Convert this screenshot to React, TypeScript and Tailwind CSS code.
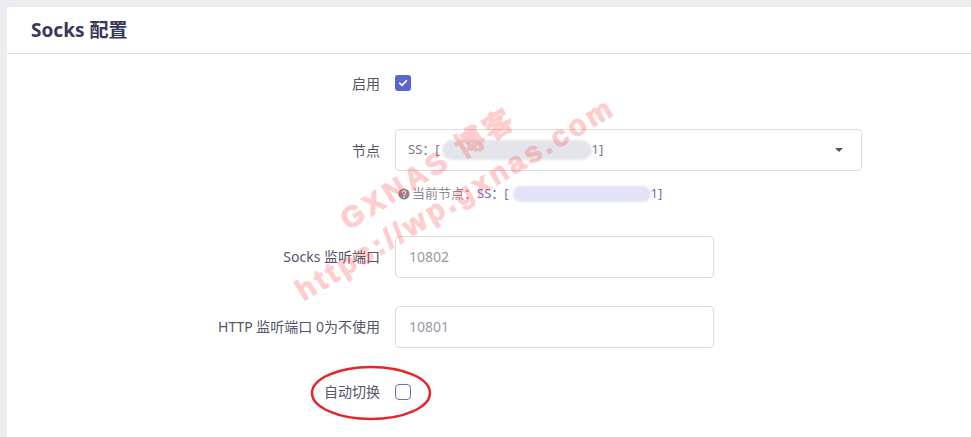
import React from 'react';

const font = { fontFamily: '"Noto Sans", "Noto Sans CJK SC", sans-serif' };
const markFont = { fontFamily: '"Liberation Sans", "Noto Sans CJK SC", sans-serif' };

const Label: React.FC<{ text: string }> = ({ text }) => (
  <div className="w-[388px] shrink-0 pr-[15px] text-right text-[14px] text-[#55556a]">{text}</div>
);

const Checkbox: React.FC<{ checked?: boolean }> = ({ checked }) =>
  checked ? (
    <span className="flex h-4 w-4 items-center justify-center rounded-[3px] bg-[#5865d4]">
      <svg width="10" height="10" viewBox="0 0 10 10" fill="none">
        <path d="M1.8 5.2 4 7.3 8.3 2.8" stroke="white" strokeWidth="1.8" strokeLinecap="round" strokeLinejoin="round" />
      </svg>
    </span>
  ) : (
    <span className="block h-4 w-4 rounded-[4px] border-[1.5px] border-[#6a72bd] bg-white" />
  );

const App: React.FC = () => {
  return (
    <div className="relative h-[437px] w-[971px] overflow-hidden bg-[#ececf0] pl-[7px] pt-[7px]" style={font}>
      <div className="h-full rounded-tl-[3px] bg-white">
        {/* header */}
        <div className="flex h-[47px] items-center border-b border-[#dedee2] pl-[24px]">
          <h2 className="text-[19px] font-bold text-[#37375a]">Socks 配置</h2>
        </div>

        {/* form */}
        <div className="pt-[8px]">
          <div className="flex h-[42px] items-center">
            <Label text="启用" />
            <Checkbox checked />
          </div>

          <div className="mt-[25px] flex items-center">
            <Label text="节点" />
            <div className="flex h-[42px] w-[467px] items-center rounded-[4px] border border-[#dcdce0] pl-[12px] pr-[18px] text-[13px] text-[#77778a]">
              <span>SS：[</span>
              <span className="ml-[2px] h-[20px] w-[150px] rounded-full bg-[#e4e5ea] blur-[1px]" />
              <span>1]</span>
              <span className="ml-auto h-0 w-0 border-x-[4px] border-t-[4px] border-x-transparent border-t-[#555]" />
            </div>
          </div>

          <div className="mt-[13px] flex items-center pl-[391px] text-[13px] text-[#8a8a96]">
            <svg width="12" height="12" viewBox="0 0 12 12" className="mr-[2px]">
              <circle cx="6" cy="6" r="5.6" fill="#8a8a92" />
              <path d="M4.3 4.6a1.7 1.7 0 1 1 2.4 1.5c-.5.3-.7.5-.7 1.1" stroke="white" strokeWidth="1.3" fill="none" strokeLinecap="round" />
              <circle cx="6" cy="9" r="0.8" fill="white" />
            </svg>
            <span>当前节点：</span>
            <span className="text-[#6c70b8]">SS：[</span>
            <span className="ml-[4px] h-[16px] w-[138px] rounded-full bg-[#e2e3f6] blur-[1px]" />
            <span className="text-[#6c70b8]">1]</span>
          </div>

          <div className="mt-[32px] flex items-center">
            <Label text="Socks 监听端口" />
            <div className="flex h-[42px] w-[319px] items-center rounded-[4px] border border-[#dcdce0] pl-[13px] text-[14px] text-[#9a9aa6]">
              10802
            </div>
          </div>

          <div className="mt-[28px] flex items-center">
            <Label text="HTTP 监听端口 0为不使用" />
            <div className="flex h-[42px] w-[319px] items-center rounded-[4px] border border-[#dcdce0] pl-[13px] text-[14px] text-[#9a9aa6]">
              10801
            </div>
          </div>

          <div className="mt-[23px] flex h-[42px] items-center">
            <Label text="自动切换" />
            <Checkbox />
          </div>
        </div>
      </div>

      {/* watermark */}
      <div className="pointer-events-none absolute left-[343px] top-[206px] h-[32px] origin-left -rotate-[32deg] whitespace-nowrap text-[29px] font-bold leading-[32px] tracking-[4px] text-[#ff3232] opacity-[0.24] [-webkit-text-stroke:1.2px_#ff3232]" style={markFont}>
        GXNAS 博客
      </div>
      <div className="pointer-events-none absolute left-[298px] top-[277px] h-[32px] origin-left -rotate-[31deg] whitespace-nowrap text-[29px] font-bold leading-[32px] tracking-[3.5px] text-[#ff3232] opacity-[0.24] [-webkit-text-stroke:1.2px_#ff3232]" style={markFont}>
        https://wp.gxnas.com
      </div>

      {/* red annotation ellipse */}
      <svg className="pointer-events-none absolute left-[309px] top-[364px]" width="124" height="58" viewBox="0 0 124 58">
        <ellipse cx="62" cy="29" rx="59" ry="26" fill="none" stroke="#e4262a" strokeWidth="2.5" />
      </svg>
    </div>
  );
};

export default App;
